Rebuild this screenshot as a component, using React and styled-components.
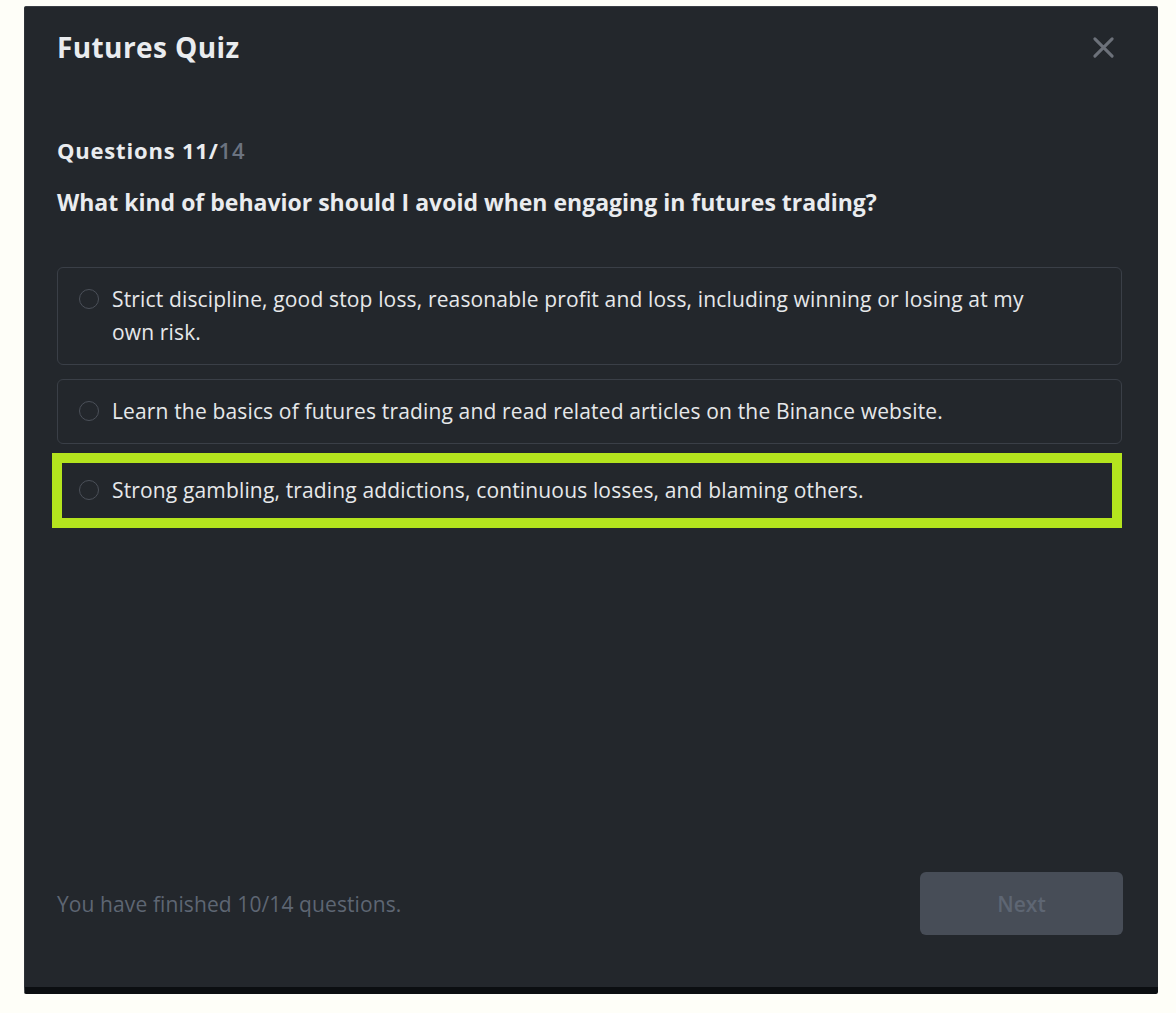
import React from "react";
import styled, { createGlobalStyle } from "styled-components";

const GlobalStyle = createGlobalStyle`
  html, body {
    margin: 0;
    padding: 0;
    background: #fefef8;
  }
  body {
    font-family: "Open Sans", "Noto Sans", "Liberation Sans", sans-serif;
  }
  * { box-sizing: border-box; }
`;

const Page = styled.div`
  width: 1176px;
  height: 1013px;
  padding: 6px 0 0 24px;
  background: #fefef8;
`;

const Modal = styled.div`
  width: 1134px;
  height: 988px;
  background: #23272c;
  border-top: 1px solid #3a3e45;
  border-left: 1px solid #2e3238;
  border-bottom: 7px solid #0b0e11;
  border-radius: 2px;
  padding: 22px 36px 52px 32px;
  display: flex;
  flex-direction: column;
`;

const Header = styled.div`
  display: flex;
  align-items: center;
  justify-content: space-between;
  height: 36px;
`;

const Title = styled.h1`
  margin: 0;
  font-size: 28px;
  line-height: 36px;
  font-weight: 700;
  color: #eaecef;
  letter-spacing: 0.4px;
`;

const CloseButton = styled.button`
  border: 0;
  background: transparent;
  padding: 0;
  margin-right: 7px;
  width: 24px;
  height: 24px;
  display: flex;
  align-items: center;
  justify-content: center;
  cursor: pointer;
`;

const Counter = styled.div`
  margin-top: 71px;
  font-size: 22px;
  line-height: 28px;
  font-weight: 700;
  color: #eaecef;
  letter-spacing: 0.8px;
`;

const Total = styled.span`
  color: #6b7380;
  font-weight: 600;
`;

const Question = styled.div`
  margin-top: 24px;
  font-size: 23px;
  line-height: 28px;
  font-weight: 700;
  color: #eaecef;
  letter-spacing: 0;
`;

const Options = styled.div`
  margin-top: 51px;
  display: flex;
  flex-direction: column;
  gap: 14px;
`;

const Option = styled.label`
  display: flex;
  align-items: flex-start;
  gap: 13px;
  margin-right: ${(p) => (p.$highlighted ? "5px" : "0")};
  padding: 15px ${(p) => (p.$highlighted ? "90px" : "95px")} 15px 21px;
  border: 1px solid ${(p) => (p.$highlighted ? "#b4e41e" : "#3a3f47")};
  border-radius: ${(p) => (p.$highlighted ? "0" : "6px")};
  font-size: 21px;
  line-height: 33px;
  font-weight: 500;
  color: #e6e8ea;
  letter-spacing: 0.15px;
  cursor: pointer;
  outline: ${(p) => (p.$highlighted ? "10px solid #b4e41e" : "none")};
  outline-offset: -5px;
`;

const Radio = styled.span`
  flex: none;
  width: 20px;
  height: 20px;
  margin-top: 6px;
  border-radius: 50%;
  border: 1.5px solid #4b5059;
`;

const Spacer = styled.div`
  flex: 1;
`;

const Footer = styled.div`
  display: flex;
  align-items: center;
  justify-content: space-between;
`;

const Progress = styled.div`
  font-size: 21px;
  line-height: 28px;
  color: #5e6673;
  letter-spacing: 0.1px;
`;

const NextButton = styled.button`
  width: 203px;
  height: 63px;
  margin-right: -1px;
  border: 0;
  border-radius: 6px;
  background: #474d57;
  color: #5e6673;
  font-family: inherit;
  font-size: 21px;
  font-weight: 600;
  cursor: not-allowed;
`;

const options = [
  "Strict discipline, good stop loss, reasonable profit and loss, including winning or losing at my own risk.",
  "Learn the basics of futures trading and read related articles on the Binance website.",
  "Strong gambling, trading addictions, continuous losses, and blaming others.",
];

export default function App() {
  return (
    <>
      <GlobalStyle />
      <Page>
        <Modal>
          <Header>
            <Title>Futures Quiz</Title>
            <CloseButton aria-label="Close">
              <svg width="23" height="23" viewBox="0 0 24 24" fill="none">
                <path d="M3 3 L21 21 M21 3 L3 21" stroke="#6c717a" strokeWidth="3.2" strokeLinecap="round" />
              </svg>
            </CloseButton>
          </Header>
          <Counter>
            Questions 11/<Total>14</Total>
          </Counter>
          <Question>What kind of behavior should I avoid when engaging in futures trading?</Question>
          <Options>
            {options.map((text, i) => (
              <Option key={i} $highlighted={i === 2}>
                <Radio />
                <span>{text}</span>
              </Option>
            ))}
          </Options>
          <Spacer />
          <Footer>
            <Progress>You have finished 10/14 questions.</Progress>
            <NextButton disabled>Next</NextButton>
          </Footer>
        </Modal>
      </Page>
    </>
  );
}
